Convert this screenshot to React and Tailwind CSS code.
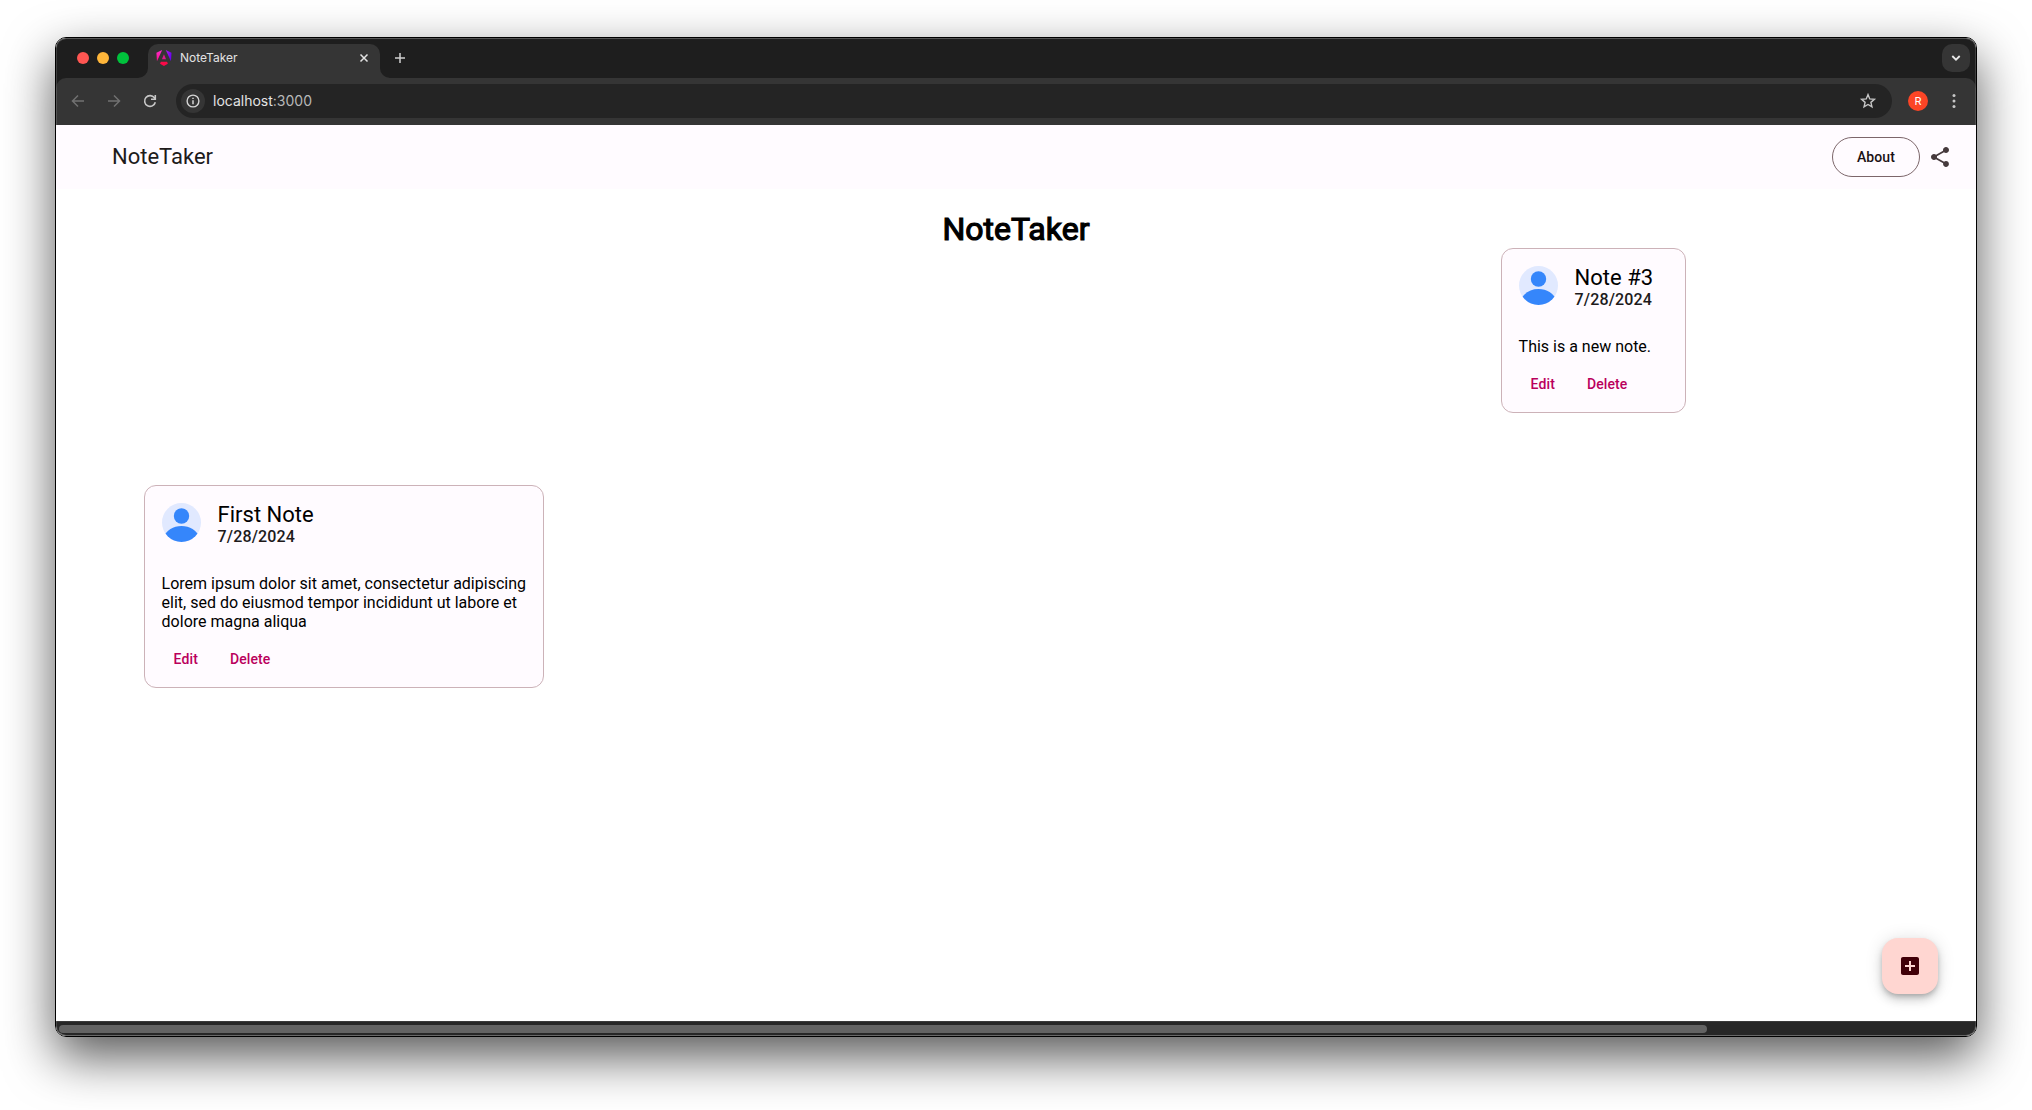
import React from "react";

function AngularMark() {
  return (
    <svg className="-mt-[6px] size-4" viewBox="0 0 223 236">
      <defs>
        <linearGradient id="ngLeft" x1="0" y1="0" x2="0" y2="1">
          <stop offset="0" stopColor="#ff2bd0" />
          <stop offset="1" stopColor="#f8108a" />
        </linearGradient>
        <linearGradient id="ngRight" x1="0" y1="0" x2="1" y2="0.4">
          <stop offset="0" stopColor="#b01ee8" />
          <stop offset="1" stopColor="#6c00f5" />
        </linearGradient>
      </defs>
      <path fill="url(#ngLeft)" d="M7.937 165.115 0 39.192 84.690 0Z" />
      <path fill="url(#ngRight)" d="m222.077 39.192-8.019 125.923L137.387 0Z" />
      <path fill="#e01890" d="M111.039 62.675l30.357 73.803H80.681Z" />
      <path fill="#fa0a48" d="m168.972 202.017-57.933 33.056-57.934-33.056 11.783-28.556h92.301Z" />
    </svg>
  );
}

function BrowserTab() {
  return (
    <div className="relative flex h-[34px] w-[232px] items-center rounded-t-[10px] bg-[#353535] pl-2 pr-2">
      <svg className="absolute -left-[10px] bottom-0 size-[10px]" viewBox="0 0 10 10" fill="#353535">
        <path d="M10 0v10H0A10 10 0 0 0 10 0z" />
      </svg>
      <svg className="absolute -right-[10px] bottom-0 size-[10px]" viewBox="0 0 10 10" fill="#353535">
        <path d="M0 0v10h10A10 10 0 0 1 0 0z" />
      </svg>
      <AngularMark />
      <span className="-mt-[6px] ml-2 text-[12px] leading-4 text-[#e3e3e3]">NoteTaker</span>
      <svg className="-mt-[6px] ml-auto mr-[3px] size-[10px]" viewBox="0 0 10 10" stroke="#e3e3e3" strokeWidth="1.5">
        <path d="M1.500 1.500l7 7M8.500 1.500l-7 7" />
      </svg>
    </div>
  );
}

function TabStrip() {
  return (
    <div className="flex h-10 items-end bg-[#1e1e1e] pl-[21px] pr-[6px]">
      <div className="mb-[14px] mr-[19px] flex gap-2">
        <span className="size-3 rounded-full bg-[#ff5652]" />
        <span className="size-3 rounded-full bg-[#ffb63a]" />
        <span className="size-3 rounded-full bg-[#00c23c]" />
      </div>
      <BrowserTab />
      <svg className="mb-[15px] ml-[15px] size-[10px]" viewBox="0 0 10 10" stroke="#d0d0d0" strokeWidth="1.5">
        <path d="M5 0v10M0 5h10" />
      </svg>
      <div className="mb-[6px] ml-auto flex size-7 items-center justify-center rounded-[10px] bg-[#353535]">
        <svg className="size-[10px]" viewBox="0 0 10 10" fill="none" stroke="#e8e8e8" strokeWidth="1.800">
          <path d="M1.300 3l3.700 3.700L8.700 3" />
        </svg>
      </div>
    </div>
  );
}

function Toolbar() {
  return (
    <div className="bg-[#1e1e1e]">
      <div className="flex h-[47px] items-center rounded-t-[10px] bg-[#353535] pb-px pl-[14px]">
        <svg className="size-4" viewBox="0 0 16 16" fill="none" stroke="#717171" strokeWidth="1.500">
          <path d="M14 8H3M8 2.500L2.500 8 8 13.500" />
        </svg>
        <svg className="ml-5 size-4" viewBox="0 0 16 16" fill="none" stroke="#717171" strokeWidth="1.500">
          <path d="M2 8h11M8 2.500L13.500 8 8 13.500" />
        </svg>
        <svg className="ml-5 size-4" viewBox="0 0 16 16" fill="none" stroke="#c7c7c7" strokeWidth="1.600">
          <path d="M13.300 9.200A5.400 5.400 0 1 1 12.400 4.800L13.300 6" />
          <path d="M13.300 2v4.300H9" />
        </svg>
        <div className="ml-[18px] flex h-[34px] w-[1716px] items-center rounded-full bg-[#242424] pl-[5px] pr-4">
          <span className="flex size-6 items-center justify-center rounded-full bg-[#353535]">
            <svg className="size-[14px]" viewBox="0 0 14 14" fill="none" stroke="#d5d5d5" strokeWidth="1.400">
              <circle cx="7" cy="7" r="5.900" />
              <path d="M7 6.200v4M7 3.700v1.400" strokeWidth="1.500" />
            </svg>
          </span>
          <span className="ml-2 text-[14px] leading-5 text-[#e3e3e3]">
            localhost<span className="text-[#b8b8b8]">:3000</span>
          </span>
          <svg className="ml-auto size-4 overflow-visible" viewBox="0 0 16 16" fill="none" stroke="#c7c7c7" strokeWidth="1.400">
            <path d="M8 1.600l1.750 4.300 4.650.4-3.500 3.050 1.050 4.550L8 11.500l-3.950 2.400 1.050-4.550L1.600 6.300l4.650-.4z" />
          </svg>
        </div>
        <span className="ml-4 flex size-5 items-center justify-center rounded-full bg-[#fc4526] text-[11px] text-white">R</span>
        <svg className="ml-[18px] size-4" viewBox="0 0 16 16" fill="#c7c7c7">
          <circle cx="8" cy="2.500" r="1.500" />
          <circle cx="8" cy="8" r="1.500" />
          <circle cx="8" cy="13.500" r="1.500" />
        </svg>
      </div>
    </div>
  );
}

function AppBar() {
  return (
    <header className="flex h-16 items-center bg-[#fffbff] pl-14 pr-6 text-[#201a1b]">
      <span className="text-[22px] leading-7">NoteTaker</span>
      <button className="ml-auto flex h-10 w-[88px] items-center justify-center rounded-full border border-[#7c666a] text-[14px] font-medium tracking-[0.1px] text-[#1a1114]">
        About
      </button>
      <svg className="ml-2 size-6" viewBox="0 0 24 24" fill="#463a3d">
        <path d="M18 16.080c-.76 0-1.440.3-1.960.77L8.910 12.700c.05-.23.09-.46.09-.7s-.04-.47-.09-.7l7.050-4.110c.54.5 1.250.81 2.040.81 1.660 0 3-1.340 3-3s-1.340-3-3-3-3 1.340-3 3c0 .24.04.47.09.7L8.040 9.810C7.500 9.310 6.790 9 6 9c-1.660 0-3 1.340-3 3s1.340 3 3 3c.79 0 1.500-.31 2.040-.81l7.120 4.160c-.05.21-.08.43-.08.65 0 1.610 1.310 2.920 2.920 2.920s2.920-1.310 2.920-2.920-1.310-2.920-2.920-2.920z" />
      </svg>
    </header>
  );
}

function Avatar() {
  return (
    <svg className="size-[39px] shrink-0" viewBox="0 0 39 39">
      <defs>
        <clipPath id="avatarClip">
          <circle cx="19.500" cy="19.500" r="19.500" />
        </clipPath>
      </defs>
      <g clipPath="url(#avatarClip)">
        <rect width="39" height="39" fill="#e1e9ff" />
        <circle cx="19.500" cy="13" r="7.700" fill="#3586fb" />
        <path d="M0 35.500C5 27 11 23.100 19.500 23.100S34 27 39 35.500V39H0z" fill="#3586fb" />
      </g>
    </svg>
  );
}

function NoteCard({ title, date, lines, className }) {
  return (
    <article className={`absolute flex flex-col rounded-xl border border-[#ccb2b8] bg-[#fffbff] pl-[16.6px] pt-[17px] text-black ${className}`}>
      <div className="flex">
        <Avatar />
        <div className="ml-[17px] flex flex-col pt-px">
          <h2 className="text-[22px] leading-[22px]">{title}</h2>
          <p className="text-[16px] font-medium leading-[22px] tracking-[0.15px] text-[#201a1b]">{date}</p>
        </div>
      </div>
      <div className="mt-[26px] text-[16px] leading-[19px]">
        {lines.map((line) => (
          <p key={line} className="whitespace-nowrap">{line}</p>
        ))}
      </div>
      <div className="mt-[18px] flex gap-8 pl-3 text-[14px] font-medium leading-5 tracking-[0.1px] text-[#ba005c]">
        <button>Edit</button>
        <button>Delete</button>
      </div>
    </article>
  );
}

export default function App() {
  return (
    <div className="h-[1110px] w-[2032px] overflow-hidden bg-white pl-[55px] pt-[37px] font-['Roboto',sans-serif]">
      <div className="w-[1922px] rounded-[11px] border border-black shadow-[0_20px_50px_rgba(0,0,0,0.66)]">
        <div className="relative flex h-[998px] flex-col overflow-hidden rounded-[10px] bg-white">
          <div className="font-['Inter',sans-serif]">
            <TabStrip />
            <Toolbar />
          </div>
          <AppBar />
          <main className="relative flex-1">
            <h1 className="mt-[21px] text-center text-[32px] leading-[38px] text-black [-webkit-text-stroke:1.2px_black]">NoteTaker</h1>
            <NoteCard
              className="left-[1445px] top-[59px] h-[165px] w-[185px]"
              title="Note #3"
              date="7/28/2024"
              lines={["This is a new note."]}
            />
            <NoteCard
              className="left-[88px] top-[296px] h-[203px] w-[400px]"
              title="First Note"
              date="7/28/2024"
              lines={[
                "Lorem ipsum dolor sit amet, consectetur adipiscing",
                "elit, sed do eiusmod tempor incididunt ut labore et",
                "dolore magna aliqua",
              ]}
            />
            <button className="absolute bottom-[27px] right-[38px] flex size-14 items-center justify-center rounded-2xl bg-[#ffd6d1] shadow-[0_3px_5px_-1px_rgba(0,0,0,0.2),0_6px_10px_rgba(0,0,0,0.14),0_1px_18px_rgba(0,0,0,0.12)]">
              <svg className="size-6" viewBox="0 0 24 24" fill="#410008">
                <path d="M19 3H5c-1.110 0-2 .9-2 2v14c0 1.100.89 2 2 2h14c1.100 0 2-.9 2-2V5c0-1.100-.9-2-2-2zm-2 10h-4v4h-2v-4H7v-2h4V7h2v4h4v2z" />
              </svg>
            </button>
          </main>
          <div className="flex h-[15px] border-t border-[#3a3a3a] bg-[#272727] pl-[3px] pt-[3px]">
            <div className="h-2 w-[1648px] rounded-full bg-[#636363]" />
          </div>
          <div className="pointer-events-none absolute inset-x-0 top-0 h-[87px] rounded-t-[10px] border-x border-t border-white/25 border-x-white/15" />
          <div className="pointer-events-none absolute inset-x-0 bottom-0 h-[15px] rounded-b-[10px] border-x border-b border-white/30 border-x-white/15" />
        </div>
      </div>
    </div>
  );
}
